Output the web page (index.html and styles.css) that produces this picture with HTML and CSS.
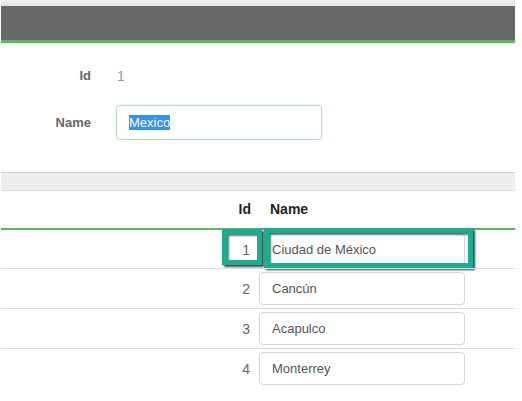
FILE: index.html
```html
<!DOCTYPE html>
<html>
<head>
<meta charset="utf-8">
<link rel="stylesheet" href="styles.css">
</head>
<body>
<div class="page">
  <div class="topstrip"></div>
  <div class="navbar"></div>
  <div class="form">
    <div class="label">Id</div>
    <div class="value">1</div>
    <div class="label">Name</div>
    <div class="field"><span class="selected">Mexico</span></div>
  </div>
  <div class="band"></div>
  <div class="table">
    <div class="row head">
      <div></div>
      <div class="id">Id</div>
      <div class="hname">Name</div>
      <div></div>
    </div>
    <div class="row first">
      <div></div>
      <div class="id">1</div>
      <div class="cell"><div class="input">Ciudad de México</div></div>
      <div></div>
      <div class="frame frame-id"></div>
      <div class="frame frame-name"></div>
    </div>
    <div class="row">
      <div></div>
      <div class="id">2</div>
      <div class="cell"><div class="input">Cancún</div></div>
      <div></div>
    </div>
    <div class="row">
      <div></div>
      <div class="id">3</div>
      <div class="cell"><div class="input">Acapulco</div></div>
      <div></div>
    </div>
    <div class="row">
      <div></div>
      <div class="id">4</div>
      <div class="cell"><div class="input">Monterrey</div></div>
      <div></div>
    </div>
  </div>
</div>
</body>
</html>
```
FILE: styles.css
```css
* { box-sizing: border-box; }
html, body { margin: 0; padding: 0; background: #fff; }
body { font-family: "Liberation Sans", Arial, sans-serif; font-size: 13px; color: #555; }
.page { width: 514px; margin-left: 1px; }
.topstrip { height: 6px; background: linear-gradient(#efefef, #e3e3e3); }
.navbar {
  height: 37px;
  background: #686868;
  border-bottom: 3px solid #5cb85c;
  box-shadow: 0 2px 2px rgba(0,0,0,0.08);
}
.form {
  display: grid;
  grid-template-columns: 90px 206px;
  column-gap: 25px;
  row-gap: 19px;
  align-items: center;
  padding: 23px 0 32px 0;
}
.label { text-align: right; font-weight: bold; color: #666; font-size: 13px; line-height: 20px; }
.value { color: #999; font-size: 14px; line-height: 20px; padding-left: 1px; }
.field {
  height: 35px;
  border: 1px solid #b8dfba;
  border-radius: 4px;
  box-shadow: 0 0 2px rgba(92,184,92,0.35);
  padding: 0 12px;
  display: flex;
  align-items: center;
  font-size: 13px;
}
.selected { background: #3390ff; color: #fff; line-height: 15px; }
.band {
  height: 19px;
  background: #eeeeee;
  border-top: 1px solid #cfcfcf;
  border-bottom: 1px solid #dcdcdc;
}
.row {
  display: grid;
  grid-template-columns: 200px 40px 206px 50px;
  column-gap: 9px;
  align-items: center;
  border-top: 1px solid #dddddd;
  padding: 3px 0;
  height: 40px;
  position: relative;
}
.row.head {
  border-top: none;
  border-bottom: 2px solid #5cb85c;
  height: 39px;
  padding: 0 0 1px 0;
  font-weight: bold;
  color: #222;
  font-size: 14px;
}
.row.first { border-top: none; height: 38px; }
.id { text-align: right; font-size: 14px; color: #666; }
.head .id { color: #222; margin-right: -1px; }
.hname { padding-left: 11px; }
.input {
  height: 33px;
  border: 1px solid #d6d6d6;
  border-radius: 4px;
  padding: 0 12px;
  display: flex;
  align-items: center;
  font-size: 13px;
  color: #555;
  background: #fff;
}
.frame {
  position: absolute;
  border: 5px solid #14b08f;
  box-shadow: 2px 2px 2px rgba(0,0,0,0.75), inset 2px 2px 2px rgba(0,0,0,0.55);
}
.frame-id { left: 221px; top: -1px; width: 40px; height: 36px; }
.frame-name { left: 263px; top: -2px; width: 209px; height: 40px; }
```
